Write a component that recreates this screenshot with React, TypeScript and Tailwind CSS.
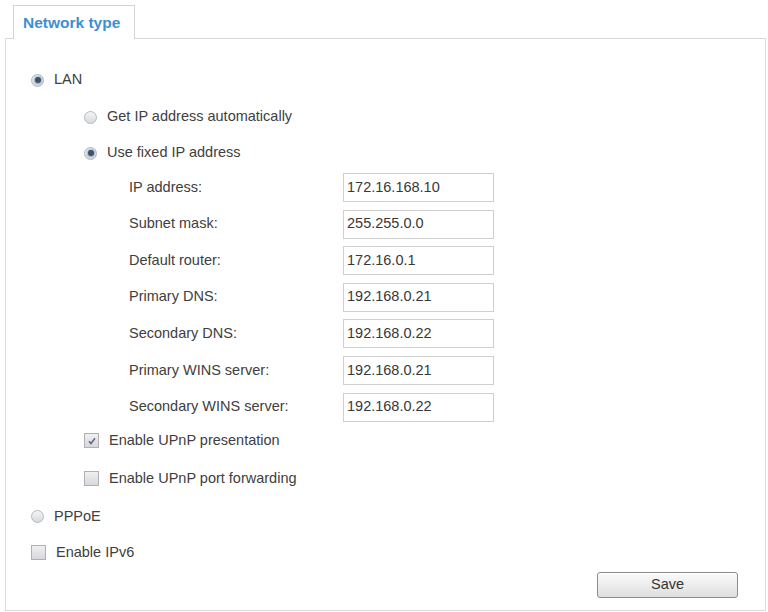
import React from "react";

const FIELDS: { label: string; value: string }[] = [
  { label: "IP address:", value: "172.16.168.10" },
  { label: "Subnet mask:", value: "255.255.0.0" },
  { label: "Default router:", value: "172.16.0.1" },
  { label: "Primary DNS:", value: "192.168.0.21" },
  { label: "Secondary DNS:", value: "192.168.0.22" },
  { label: "Primary WINS server:", value: "192.168.0.21" },
  { label: "Secondary WINS server:", value: "192.168.0.22" },
];

function Radio({ checked }: { checked?: boolean }) {
  return (
    <span className="w-[13px] h-[13px] rounded-full border border-[#b4b8bd] bg-gradient-to-b from-[#f4f5f6] to-[#d7dadd] flex items-center justify-center shrink-0">
      {checked && <span className="w-[6px] h-[6px] rounded-full bg-[#3d5468] shadow-[0_0_2px_1px_rgba(90,130,170,0.6)]" />}
    </span>
  );
}

function Check({ checked }: { checked?: boolean }) {
  return (
    <span className="w-[15px] h-[15px] border border-[#b0b0b0] bg-gradient-to-b from-[#f0f0f2] to-[#d8d8dd] flex items-center justify-center shrink-0">
      {checked && (
        <svg width="10" height="10" viewBox="0 0 10 10">
          <path d="M2 5.2 L4 7.5 L8 2.2" fill="none" stroke="#5a6a80" strokeWidth="1.5" />
        </svg>
      )}
    </span>
  );
}

function Option({ control, label }: { control: React.ReactNode; label: string }) {
  return (
    <div className="h-[20px] flex items-center">
      {control}
      <span className="ml-[10px]">{label}</span>
    </div>
  );
}

export default function App() {
  return (
    <div className="w-[768px] h-[612px] bg-white overflow-hidden text-[14.5px] text-[#404040] font-['Liberation_Sans',Arial,sans-serif]">
      <div className="pt-[5px] pl-[13px] flex">
        <div className="relative z-10 -mb-px w-[122px] h-[34px] border border-b-0 border-[#d4d4d4] bg-white flex items-center pl-[9px] font-bold text-[15.5px] text-[#3d90d0]">
          Network type
        </div>
      </div>
      <div className="ml-[5px] mr-[2px] h-[573px] border border-[#dadada] pt-[31px] pl-[25px] pr-[27px] flex flex-col">
        <Option control={<Radio checked />} label="LAN" />
        <div className="pl-[53px] mt-[17px] flex flex-col">
          <Option control={<Radio />} label="Get IP address automatically" />
          <div className="mt-[16px]">
            <Option control={<Radio checked />} label="Use fixed IP address" />
          </div>
          <div className="mt-[10px] pl-[45px] flex flex-col gap-[7.6px]">
            {FIELDS.map((f) => (
              <div key={f.label} className="flex items-center h-[29px]">
                <span className="w-[214px]">{f.label}</span>
                <div className="w-[151px] h-[29px] border border-[#cfcfcf] flex items-center pl-[3px] text-[#383838]">{f.value}</div>
              </div>
            ))}
          </div>
          <div className="mt-[9px]">
            <Option control={<Check checked />} label="Enable UPnP presentation" />
          </div>
          <div className="mt-[18px]">
            <Option control={<Check />} label="Enable UPnP port forwarding" />
          </div>
        </div>
        <div className="mt-[18px]">
          <Option control={<Radio />} label="PPPoE" />
        </div>
        <div className="mt-[16px]">
          <Option control={<Check />} label="Enable IPv6" />
        </div>
        <div className="mt-[9px] flex justify-end">
          <button className="w-[141px] h-[26px] rounded-[3px] border border-[#8c8c8c] bg-gradient-to-b from-[#fbfbfb] to-[#dedede] text-[14.5px] text-[#333] shadow-[inset_0_1px_0_#fff]">
            Save
          </button>
        </div>
      </div>
    </div>
  );
}
